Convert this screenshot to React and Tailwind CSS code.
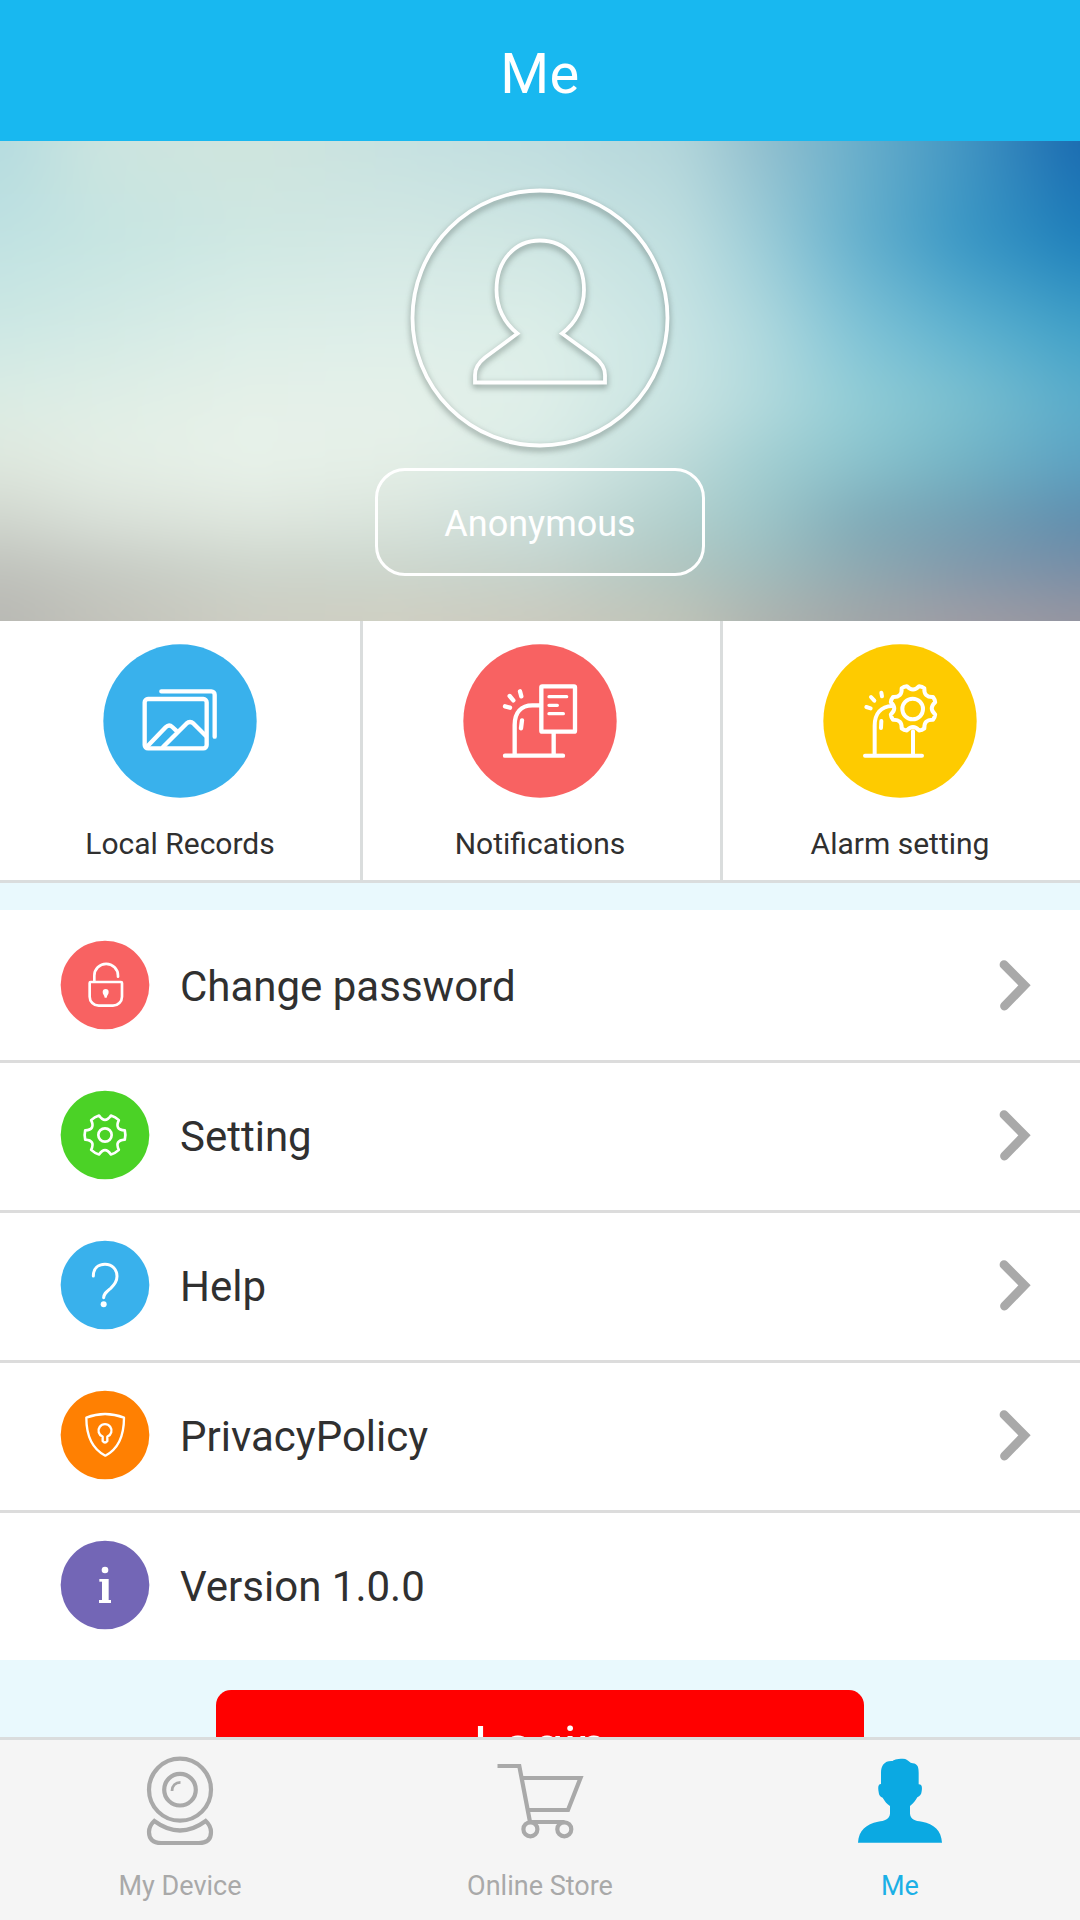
import React, { useState } from "react";

const BANNER_X = [0, 100, 250, 400, 540, 680, 760, 860, 960, 1080];

// Colour rows of the banner, from top to bottom
const BANNER_ROWS = [
  { y: 0, colors: ["#b4dbdf", "#cbe4df", "#cfe4dd", "#c6e1e0", "#bfdddf", "#b2d5da", "#92bfce", "#69aeca", "#4497c3", "#1a6ab0"] },
  { y: 100, colors: ["#c0e2e2", "#c6e5e2", "#cfe8e3", "#d3e8e4", "#cfe6e3", "#c0dfe0", "#9dcdd8", "#65b0cd", "#3b98c5", "#1f80bb"] },
  { y: 190, colors: ["#cde8e4", "#d3eae5", "#dceee8", "#deeee9", "#dceee8", "#c8e4e4", "#b0d9de", "#80c3d6", "#60b3d0", "#41a1c8"] },
  { y: 260, colors: ["#dbece4", "#dfeee6", "#e5f0e8", "#e5f1ea", "#dfefe9", "#c9e4e2", "#b3dadd", "#92cdd6", "#7cc0d0", "#5badcb"] },
  { y: 320, colors: ["#dfe8de", "#e4eee5", "#e8f2ea", "#e5efe7", "#d9ebe6", "#bddad9", "#a3cfd2", "#8bc3cd", "#74b5c6", "#5da3c3"] },
  { y: 380, colors: ["#d0d6ce", "#d9e0d8", "#dfe7de", "#d9e4dc", "#cbdedb", "#b0cfcc", "#9dc5c8", "#7fabb8", "#739fb3", "#5f8dad"] },
  { y: 430, colors: ["#bfc1bb", "#c5c9c2", "#ccd4cb", "#cbd5cc", "#c4d2cb", "#b0c5c0", "#a0bcbc", "#8fa9b1", "#8399ab", "#798ea7"] },
  { y: 480, colors: ["#b8b8b3", "#c2c2ba", "#cdcdc2", "#d0cfc2", "#cbcabe", "#c0c3b7", "#b0b4af", "#a3a6a7", "#a09da4", "#9896a0"] },
];

function BannerBackground() {
  const last = BANNER_ROWS.length - 1;

  return (
    <svg className="absolute inset-0 size-full" viewBox="0 0 1080 480" preserveAspectRatio="none">
      <defs>
        <filter id="soften" filterUnits="userSpaceOnUse" x="-80" y="-80" width="1240" height="640" colorInterpolationFilters="sRGB">
          <feGaussianBlur stdDeviation="22" />
        </filter>
        {BANNER_ROWS.map((row, i) => (
          <linearGradient key={row.y} id={`row-${i}`} gradientUnits="userSpaceOnUse" x1="0" y1="0" x2="1080" y2="0">
            {row.colors.map((color, j) => (
              <stop key={j} offset={BANNER_X[j] / 1080} stopColor={color} />
            ))}
          </linearGradient>
        ))}
        {BANNER_ROWS.slice(0, last).map((row, i) => (
          <React.Fragment key={row.y}>
            <linearGradient id={`fade-${i}`} gradientUnits="userSpaceOnUse" x1="0" y1={row.y} x2="0" y2={BANNER_ROWS[i + 1].y}>
              <stop offset="0" stopColor="#fff" />
              <stop offset="1" stopColor="#fff" stopOpacity="0" />
            </linearGradient>
            <mask id={`mask-${i}`} maskUnits="userSpaceOnUse" x="-80" y="-80" width="1240" height="640">
              <rect x="-80" y="-80" width="1240" height="640" fill={`url(#fade-${i})`} />
            </mask>
          </React.Fragment>
        ))}
      </defs>
      <g filter="url(#soften)">
        {BANNER_ROWS.map((_, i) => last - i).map((i) => (
          <rect
            key={i}
            x="-80"
            y="-80"
            width="1240"
            height="640"
            fill={`url(#row-${i})`}
            mask={i < last ? `url(#mask-${i})` : undefined}
          />
        ))}
      </g>
    </svg>
  );
}

// Outline of a cog with rounded teeth
function gearPath(cx, cy, outer, inner, teeth, start, half) {
  const at = (r, deg) => {
    const a = (deg * Math.PI) / 180;
    return `${(cx + r * Math.cos(a)).toFixed(1)} ${(cy + r * Math.sin(a)).toFixed(1)}`;
  };
  const step = 360 / teeth;
  let d = `M${at(outer, start - half)}`;
  for (let i = 0; i < teeth; i++) {
    const a = start + i * step;
    d += `Q${at(outer * 1.03, a)} ${at(outer, a + half)}`;
    d += `Q${at(inner, a + step / 2)} ${at(outer, a + step - half)}`;
  }
  return d + "Z";
}

function Avatar() {
  return (
    <svg className="w-[270px] h-[270px] overflow-visible drop-shadow-[0_3px_3px_rgba(70,85,80,0.6)]" viewBox="0 0 270 270" fill="none" stroke="#fff" strokeWidth="3.8">
      <circle cx="135" cy="135" r="127.5" />
      <path d="M112.500 150.500C99 140 91.500 124 91.500 107C91.500 77 110 57.500 135 57.500S179 77 179 107C179 124 171 140 157 150.500L190 174.500C197 180 200 186 200 192V199.500H70V192C70 186 73 180 80 174.500Z" />
    </svg>
  );
}

function RecordsIcon() {
  return (
    <g strokeWidth="13">
      <rect x="125" y="165" width="186" height="148" rx="10" />
      <path d="M175 142H325a10 10 0 0 1 10 10V278" />
      <path d="M134 306L188 250Q198 240 208 249L222 262M180 309L250 239Q261 229 272 239L309 276" />
    </g>
  );
}

function NotificationsIcon() {
  return (
    <g strokeWidth="13">
      <path d="M126 335H300M155 335V243C155 205 175 184 208 184H232M272 266V333" />
      <rect x="235" y="127" width="101" height="136" rx="3" />
      <path d="M258 158H311M258 184H283M258 209H301" strokeWidth="10" />
      <path d="M177 229L174 253M126 187l15 4M140 156l11 13M171 142l4 15" />
    </g>
  );
}

function AlarmIcon() {
  return (
    <g strokeWidth="12">
      <path d="M126 335H297M155 335V245C155 210 173 187 208 186M270 262V333" />
      <path d={gearPath(270, 193, 69, 46, 8, 22.5, 7)} strokeWidth="12" />
      <circle cx="269" cy="195" r="31" strokeWidth="12" />
      <path d="M175 231L174 252M130 189l13 4M144 159l10 11M175 146l2 11" />
    </g>
  );
}

function LockIcon() {
  return (
    <g strokeWidth="8">
      <path d="M90 124H181a3 3 0 0 1 3 3V168a27 27 0 0 1-27 27H114a27 27 0 0 1-27-27V127a3 3 0 0 1 3-3Z" />
      <path d="M101 123V105a35.500 35.500 0 0 1 71 0V108" />
      <path d="M135 145c6 0 9 4 9 9c0 8-5 9-6 17h-6c-1-8-6-9-6-17c0-5 3-9 9-9Z" fill="#fff" stroke="none" />
    </g>
  );
}

function SettingIcon() {
  return (
    <g strokeWidth="8">
      <path d={gearPath(133, 133, 61, 32, 6, 0, 13)} />
      <circle cx="133" cy="133" r="20" />
    </g>
  );
}

function HelpIcon() {
  return (
    <g strokeWidth="9">
      <path d="M98 106C98 84 112 71 133 71C155 71 169 86 169 107C169 124 161 133 150 143C137 154 130 158 129 171" />
      <circle cx="129" cy="191" r="9" fill="#fff" stroke="none" />
    </g>
  );
}

function PrivacyIcon() {
  return (
    <g strokeWidth="7">
      <path d="M77 81Q133 59 190 81C190 135 172 175 134 195C96 175 77 135 77 81Z" />
      <path d="M126 138a19.500 19.500 0 1 1 14 0V151q-7 9-14 0Z" />
    </g>
  );
}

function InfoIcon() {
  return (
    <g fill="#fff" stroke="none">
      <circle cx="133" cy="88" r="10" />
      <rect x="124" y="115" width="20" height="68" />
      <rect x="116" y="115" width="18" height="8" />
      <rect x="115" y="178" width="36" height="9" />
    </g>
  );
}

const SHORTCUTS = [
  { label: "Local Records", color: "#39b1ec", Icon: RecordsIcon },
  { label: "Notifications", color: "#f86262", Icon: NotificationsIcon },
  { label: "Alarm setting", color: "#fecb00", Icon: AlarmIcon },
];

const MENU_ITEMS = [
  { label: "Change password", color: "#f86262", Icon: LockIcon, arrow: true },
  { label: "Setting", color: "#4bd226", Icon: SettingIcon, arrow: true },
  { label: "Help", color: "#39b1ec", Icon: HelpIcon, arrow: true },
  { label: "PrivacyPolicy", color: "#ff8002", Icon: PrivacyIcon, arrow: true },
  { label: "Version 1.0.0", color: "#7366b6", Icon: InfoIcon, arrow: false },
];

function Chevron() {
  return (
    <svg className="w-8 h-[51px]" viewBox="0 0 32 51" fill="none" stroke="#a9a9a9" strokeWidth="8.800" strokeLinecap="round">
      <path d="M5 4.700L25.500 25.300L5.500 46" />
    </svg>
  );
}

function CameraIcon() {
  return (
    <svg className="w-20 h-[100px]" viewBox="0 0 80 100" fill="none" stroke="currentColor" strokeWidth="4.2">
      <circle cx="40" cy="39.700" r="31" />
      <circle cx="40" cy="39.700" r="15.800" />
      <path d="M32 41C32 36 35.500 32.500 40.500 32.300" strokeWidth="2.800" />
      <path d="M14.300 71Q40 90 65.700 71C69 74 71 78 71 82C71 89 67 93 59 93H21C13 93 9 89 9 82C9 78 11 74 14.300 71Z" />
    </svg>
  );
}

function CartIcon() {
  return (
    <svg className="w-[100px] h-[100px]" viewBox="0 0 100 100" fill="none" stroke="currentColor" strokeWidth="4.2">
      <path d="M7.500 16H29.300L40 72H74.300M32.500 28H90.500L78 60H38.500" />
      <circle cx="40.400" cy="79.300" r="7" />
      <circle cx="74.300" cy="79.300" r="7" />
    </svg>
  );
}

function PersonIcon() {
  return (
    <svg className="w-[100px] h-[100px]" viewBox="-24 -26 300 300" fill="#0ba9e2">
      <path d="M135 0C115 0 106 4 104 7C80 5 69 20 69 42V76C59 76 60 90 62 100C63 110 66 113 74 117C80 128 88 137 96 142V165C94 182 80 186 60 189C25 196 2 215 0 252H252C250 215 228 196 192 189C170 186 158 182 156 165V142C166 135 172 126 178 116C186 112 190 108 191 98C193 85 192 77 182 77L182 42C182 18 176 15 158 12C150 5 145 0 135 0Z" />
    </svg>
  );
}

const TABS = [
  { label: "My Device", Icon: CameraIcon },
  { label: "Online Store", Icon: CartIcon },
  { label: "Me", Icon: PersonIcon },
];

export default function App() {
  const [activeTab, setActiveTab] = useState("Me");

  return (
    <div className="w-[1080px] h-[1920px] flex flex-col overflow-hidden bg-[#e9f9fd] font-[Roboto,sans-serif] text-[#303030]">
      <header className="h-[141px] shrink-0 flex items-center justify-center bg-[#18b8f0] pt-1.5">
        <h1 className="text-[56px] tracking-[0.5px] text-white">Me</h1>
      </header>

      <main className="flex-1 min-h-0 overflow-hidden">
        <section className="relative h-[480px] overflow-hidden">
          <BannerBackground />
          <div className="relative flex flex-col items-center pt-[42px]">
            <Avatar />
            <button className="mt-[15px] w-[330px] h-[108px] rounded-[30px] border-3 border-white text-[36px] text-white pt-1">
              Anonymous
            </button>
          </div>
        </section>

        <section className="grid grid-cols-3 h-[262px] bg-white border-b-3 border-[#dadddd]">
          {SHORTCUTS.map(({ label, color, Icon }, i) => (
            <button key={label} className={i > 0 ? "flex flex-col items-center pt-[23px] pr-[3px] border-l-3 border-[#dadddd]" : "flex flex-col items-center pt-[23px]"}>
              <svg className="size-[154px]" viewBox="0 0 462 462" fill="none" stroke="#fff" strokeLinecap="round" strokeLinejoin="round">
                <circle cx="231" cy="231" r="230" fill={color} stroke="none" />
                <Icon />
              </svg>
              <span className="mt-7 text-[30px] leading-[36px]">{label}</span>
            </button>
          ))}
        </section>

        <ul className="mt-[27px] bg-white">
          {MENU_ITEMS.map(({ label, color, Icon, arrow }) => (
            <li key={label} className="h-[150px] flex items-center pl-[60px] pr-[49px] border-t-3 border-[#dcdcdc] pb-[3px] first:border-t-0 first:pb-0">
              <svg className="size-[90px]" viewBox="-2 -2 270 270" fill="none" stroke="#fff" strokeLinecap="round" strokeLinejoin="round">
                <circle cx="133" cy="133" r="133" fill={color} stroke="none" />
                <Icon />
              </svg>
              <span className="ml-[30px] flex-1 text-[42px] pt-0.5">{label}</span>
              {arrow && <Chevron />}
            </li>
          ))}
        </ul>

        <div className="flex justify-center mt-[30px]">
          <button className="w-[648px] h-[111px] rounded-[15px] bg-[#ff0000] text-[54px] text-white">
            Login
          </button>
        </div>
      </main>

      <nav className="h-[183px] shrink-0 grid grid-cols-3 border-t-3 border-[#dadddd] bg-[#f5f5f5]">
        {TABS.map(({ label, Icon }) => (
          <button
            key={label}
            onClick={() => setActiveTab(label)}
            className={activeTab === label ? "flex flex-col items-center pt-2.5 text-[#1bb0e6]" : "flex flex-col items-center pt-2.5 text-[#a9a9a9]"}
          >
            <Icon />
            <span className="mt-5 text-[27px] leading-[32px]">{label}</span>
          </button>
        ))}
      </nav>
    </div>
  );
}
